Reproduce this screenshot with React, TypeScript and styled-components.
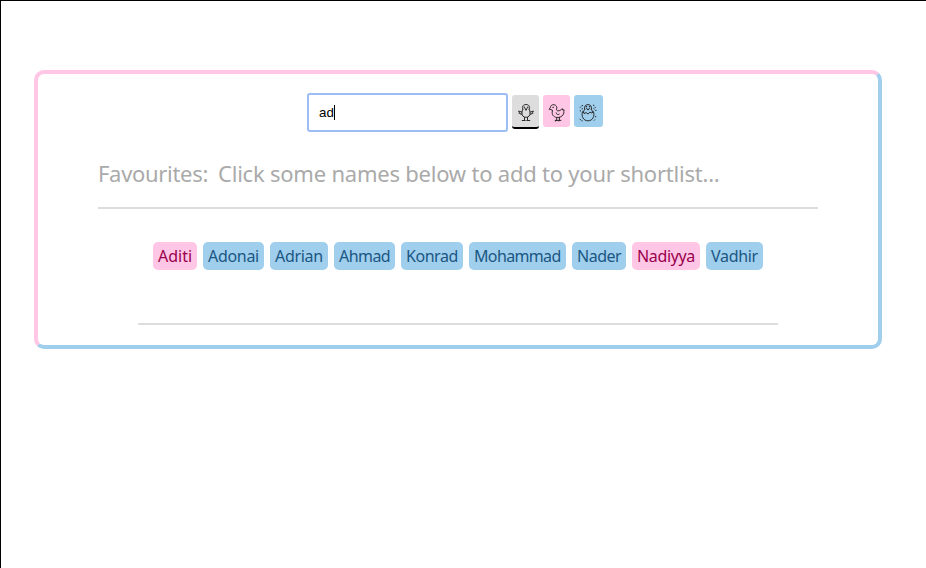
import React from 'react';
import styled, { createGlobalStyle } from 'styled-components';

const GlobalStyle = createGlobalStyle`
  * { box-sizing: border-box; }
  body { margin: 0; background: #fff; }
`;

const Page = styled.div`
  height: 568px;
  padding: 69px 0 0 33px;
  overflow: hidden;
  border-top: 1px solid #000;
  border-left: 1px solid #000;
  font-family: 'Noto Sans', sans-serif;
`;

const Panel = styled.main`
  width: 848px;
  height: 279px;
  padding: 19px 60px 0;
  display: flex;
  flex-direction: column;
  border: 4px solid;
  border-color: #ffc6e5 #a0ceed #a0ceed #ffc6e5;
  border-radius: 10px;
`;

const Toolbar = styled.div`
  display: flex;
  align-items: flex-start;
  gap: 4px;
  height: 39px;
  margin-left: 209px;
`;

const SearchBox = styled.div`
  width: 201px;
  height: 39px;
  padding-left: 10px;
  display: flex;
  align-items: center;
  border: 2px solid #9cbdf5;
  border-radius: 3px;
  background: #fff;
  color: #000;
  font: 13.33px 'Liberation Sans', Arial, sans-serif;
`;

const Caret = styled.span`
  width: 1px;
  height: 15px;
  background: #000;
`;

type Tone = 'any' | 'girl' | 'boy';
const fills: Record<Tone, string> = { any: '#dddddd', girl: '#ffc6e5', boy: '#a0ceed' };

const FilterButton = styled.button<{ $tone: Tone; $active?: boolean }>`
  width: ${p => (p.$tone === 'boy' ? 29 : 27)}px;
  height: ${p => (p.$active ? 34 : 32)}px;
  margin: 2px 0 0;
  padding: ${p => (p.$tone === 'boy' ? '8px 1px 0 0' : '8px 0 0 1px')};
  display: flex;
  justify-content: center;
  align-items: flex-start;
  border: 0;
  border-bottom: ${p => (p.$active ? '2px solid #000' : '0')};
  border-radius: 3px;
  background: ${p => fills[p.$tone]};
`;

const Icon = styled.svg`
  display: block;
  flex: none;
  fill: none;
  stroke: #222;
  stroke-width: 0.95;
  stroke-linecap: round;
  stroke-linejoin: round;
`;

const Favourites = styled.section`
  height: 77px;
  padding-top: 26px;
  display: flex;
  gap: 10px;
  border-bottom: 2px solid #ddd;
  color: #aaa;
  font-size: 22px;
  line-height: 30px;
  white-space: nowrap;
`;

const Label = styled.span`
  width: 110px;
  letter-spacing: -0.31px;
`;

const Hint = styled.span`
  letter-spacing: -0.22px;
`;

const Results = styled.section`
  height: 116px;
  margin: 0 40px;
  padding-top: 33px;
  display: flex;
  align-items: flex-start;
  justify-content: center;
  gap: 6px;
  border-bottom: 2px solid #ddd;
`;

const NameChip = styled.button<{ $tone: Tone; $width: number; $tracking: number }>`
  flex: none;
  width: ${p => p.$width}px;
  height: 28px;
  padding: 0 0 0 5px;
  border: 0;
  border-radius: 5px;
  background: ${p => fills[p.$tone]};
  color: ${p => (p.$tone === 'girl' ? '#99004d' : '#1a5783')};
  font: 16px/28px 'Noto Sans', sans-serif;
  letter-spacing: ${p => p.$tracking}px;
  text-align: left;
  white-space: nowrap;
`;

const names: { name: string; tone: Tone; width: number; tracking: number }[] = [
  { name: 'Aditi', tone: 'girl', width: 44, tracking: 0 },
  { name: 'Adonai', tone: 'boy', width: 61, tracking: -0.3 },
  { name: 'Adrian', tone: 'boy', width: 58, tracking: -0.3 },
  { name: 'Ahmad', tone: 'boy', width: 61, tracking: -0.55 },
  { name: 'Konrad', tone: 'boy', width: 62, tracking: -0.45 },
  { name: 'Mohammad', tone: 'boy', width: 97, tracking: -0.65 },
  { name: 'Nader', tone: 'boy', width: 54, tracking: -0.5 },
  { name: 'Nadiyya', tone: 'girl', width: 68, tracking: -0.35 },
  { name: 'Vadhir', tone: 'boy', width: 57, tracking: -0.3 },
];

const StandingChick = () => (
  <Icon width="20" height="20" viewBox="0 0 20 20">
    <path d="M6.8 6.2C5.4 3.6 7.4 1.5 10 1.5s4.6 2.1 3.2 4.7M6.8 6.2C5.8 8.4 5.3 11.5 7 13.2c1.5 1.5 4.5 1.5 6 0 1.7-1.7 1.2-4.8.2-7" />
    <path d="M5.8 9.1 2.6 8l.8 1.4-.5.8 1.5.2.4 1 1-.3M14.2 9.1l3.2-1.1-.8 1.4.5.8-1.5.2-.4 1-1-.3M8.8 4.8 10 7.4l1.2-2.6M8.5 14.5v3M11.5 14.5v3M6.2 17.5h3M10.8 17.5h3" />
    <path d="M8 4.1h.3M11.7 4.1h.3" strokeWidth="1.3" />
  </Icon>
);

const WalkingChick = () => (
  <Icon width="20" height="20" viewBox="0 0 20 20">
    <path d="M3.3 4.5C3.6 2.5 5 1.5 6.9 1.7c2.3.3 3.5 2.3 2.7 4.3-.3.9.2 1.8 1.2 1.8 2 .1 3.2-.7 4.4-2.2l.5 1.4 1.5-.1-.6 1.4.5.5c-.5 3.5-2.8 5.6-6.2 5.7-3.5.1-6-2.2-5.7-5.3.1-.9.4-1.6.2-2.1L2.5 6.3Z" />
    <path d="M9.1 9.8c.3 1.7 1.6 2.2 3.1 1.4M9.7 14.6v2.6M12.4 14.4v2.6M8.2 17.4h2.4M8.4 18.1l1.2-.7M11.4 17.4h2.5M12 18.1l.5-.7" />
    <path d="M6 4.3h.3" strokeWidth="1.3" />
  </Icon>
);

const HatchingChick = () => (
  <Icon width="20" height="20" viewBox="0 0 20 20">
    <path d="M6.6 6.5C5.8 3.4 7.6 1.6 10 1.6s4.2 1.8 3.4 4.9M8.4 5.1l1.6 2 1.6-2" />
    <path d="M6.6 6.7c-1 .9-1.2 1.9-1 2.8M13.4 6.7c1 .9 1.2 1.9 1 2.8M5.3 9 4.6 8.5C3 13 5.2 17.8 10 17.8s7-4.8 5.4-9.3L13.8 10l-1.9-.9-1.9 2-1.9-1.6-1.5 1Z" />
    <path d="M2.3 4.4l.5-.6M4.1 2.6h.6M4 5.8h.5M15.3 2.2l.7.3M17.3 4.3l-.5.6M15.7 5.8l.3.3M17.6 7.4h.4M2.4 7.5v.5M2 16.3l.6.4M3.8 17.8h.4M17.4 13.7h.5M16.3 17.3l.5-.5" />
    <path d="M8.4 3.7h.2M11.4 3.7h.2" strokeWidth="1.2" />
  </Icon>
);

export default function App() {
  return (
    <>
      <GlobalStyle />
      <Page>
        <Panel>
          <Toolbar>
            <SearchBox>ad<Caret /></SearchBox>
            <FilterButton $tone="any" $active aria-label="All names"><StandingChick /></FilterButton>
            <FilterButton $tone="girl" aria-label="Girls"><WalkingChick /></FilterButton>
            <FilterButton $tone="boy" aria-label="Boys"><HatchingChick /></FilterButton>
          </Toolbar>
          <Favourites>
            <Label>Favourites:</Label>
            <Hint>Click some names below to add to your shortlist...</Hint>
          </Favourites>
          <Results>
            {names.map(n => (
              <NameChip key={n.name} $tone={n.tone} $width={n.width} $tracking={n.tracking}>
                {n.name}
              </NameChip>
            ))}
          </Results>
        </Panel>
      </Page>
    </>
  );
}
